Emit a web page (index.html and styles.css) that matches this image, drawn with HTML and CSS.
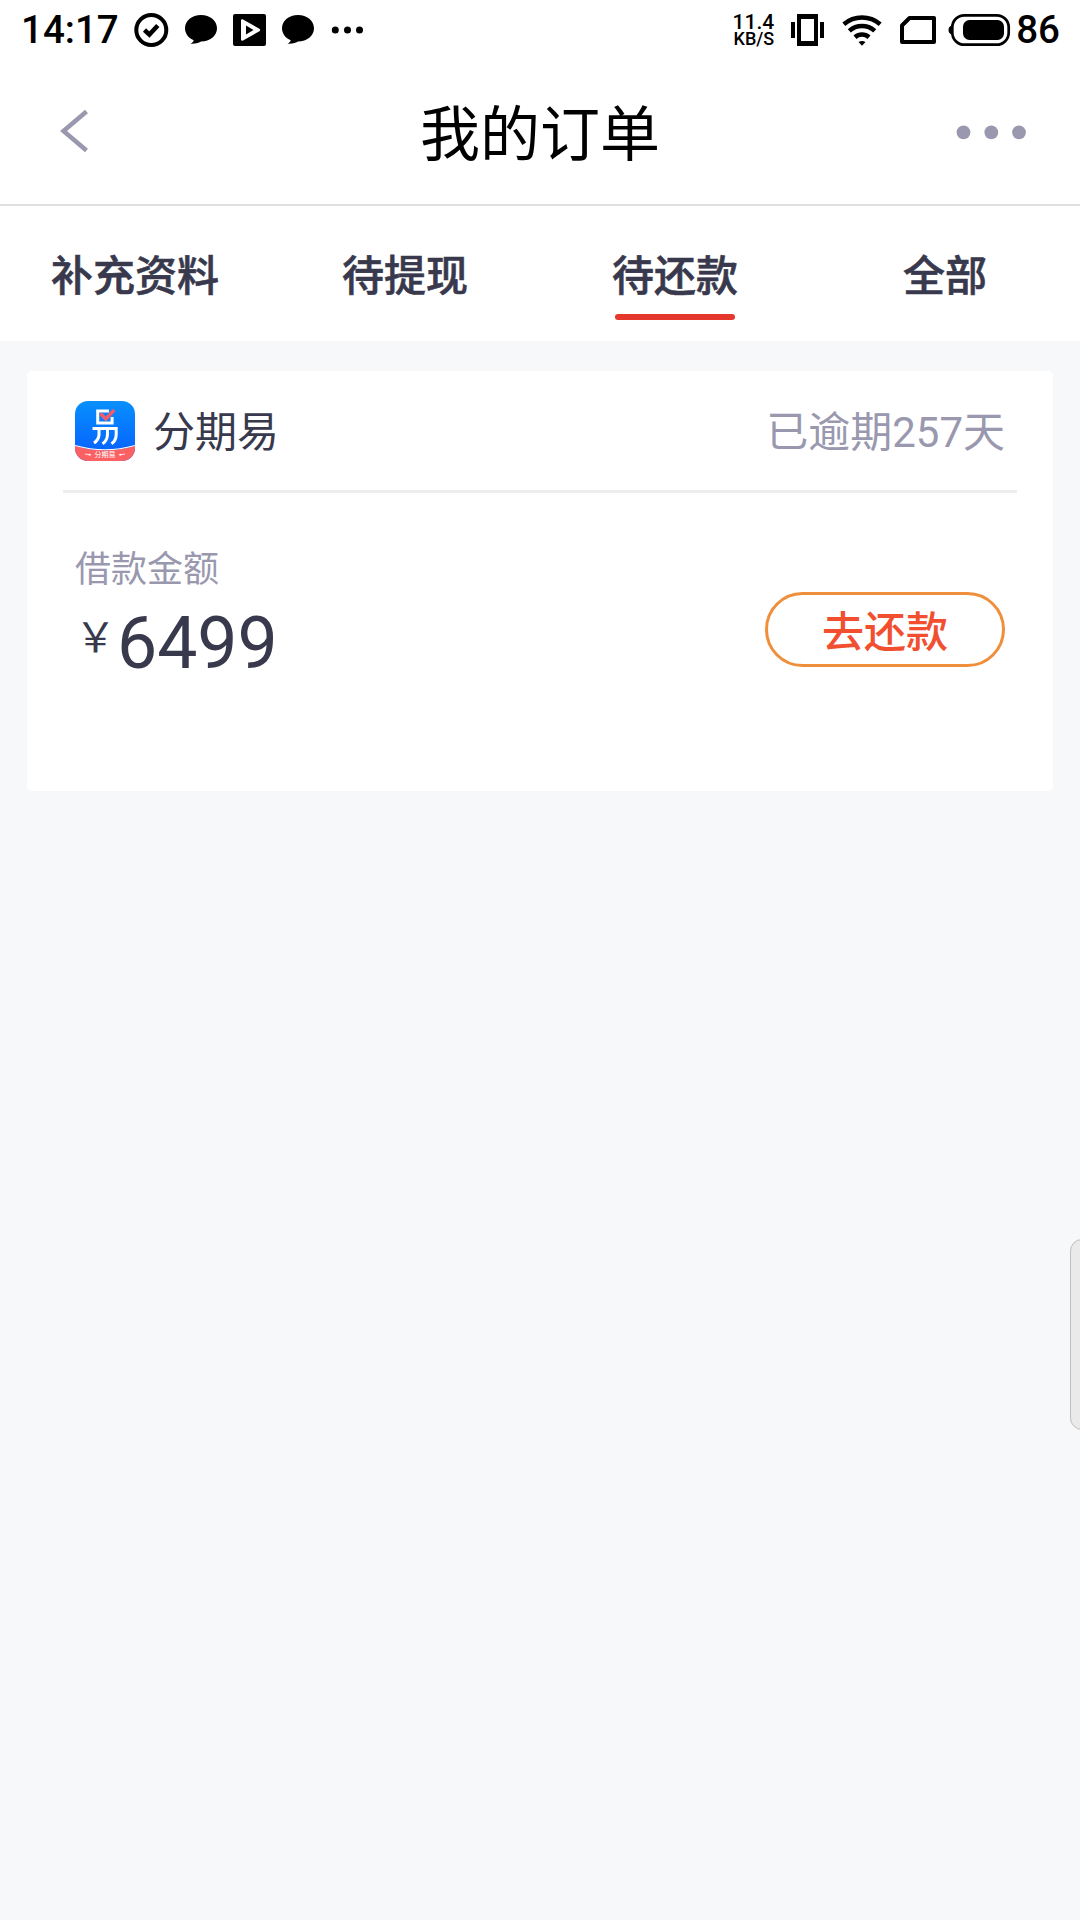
FILE: index.html
```html
<!DOCTYPE html>
<html lang="zh-CN">
<head>
<meta charset="utf-8">
<title>我的订单</title>
<link rel="stylesheet" href="styles.css">
</head>
<body>
<div class="status">
  <span class="status-num clock">14:17</span>
  <svg class="notices" width="230" height="36" viewBox="133 12 230 36">
    <circle cx="151.3" cy="30" r="15" fill="none" stroke="#000" stroke-width="4"/>
    <path d="M144.500 30l4.900 4.600 8.400-9.200" fill="none" stroke="#000" stroke-width="4.500"/>
    <path id="bubble" d="M201 15c9 0 16 5.900 16 13.300s-7 13.200-16 13.200c-1.500 1.200-5 2.500-10.500 2.300 2-1 3-2.200 3.200-3.500C188.500 38.200 185 33.600 185 28.300 185 20.900 192 15 201 15z"/>
    <path fill-rule="evenodd" d="M235 14h29a2 2 0 0 1 2 2v28a2 2 0 0 1-2 2h-29a2 2 0 0 1-2-2V16a2 2 0 0 1 2-2zM243 19.500c-1.200-.6-2 0-2 1.200v18.600c0 1.200.8 1.800 2 1.200l16.400-9.200c1-.6 1-2 0-2.600zM246 25.500l7.500 4.500-7.500 4.500z"/>
    <use href="#bubble" x="97"/>
    <circle cx="335.300" cy="30" r="3.500"/><circle cx="347.500" cy="30" r="3.500"/><circle cx="359.500" cy="30" r="3.500"/>
  </svg>
  <div class="speed"><span class="rate">11.4</span><span class="unit">KB/S</span></div>
  <svg class="signals" width="222" height="36" viewBox="790 12 222 36">
    <path fill-rule="evenodd" d="M797 14h21v32h-21zM801 19v22h13V19zM791 22h4v16h-4zM820 22h4v16h-4z"/>
    <g fill="none" stroke="#000" stroke-width="4.500">
      <path d="M843.800 24.200a28 28 0 0 1 36.400 0"/>
      <path d="M849.300 30.800a19 19 0 0 1 25.400 0"/>
      <path d="M855 37.200a10.500 10.500 0 0 1 14 0"/>
    </g>
    <path d="M902 42V25.500l7.500-7.500H934v24z" fill="none" stroke="#000" stroke-width="4" stroke-linejoin="round"/>
    <path d="M858.500 42q3.500-1.800 7 0L862 45.700z"/>
    <rect x="952.300" y="15.300" width="56.400" height="29.400" rx="12" fill="none" stroke="#000" stroke-width="2.700"/>
    <path d="M951.500 25.500c-4 1.500-4 7.500 0 9z"/>
    <rect x="963" y="20" width="41" height="20" rx="6.500"/>
  </svg>
  <span class="status-num">86</span>
</div>
<header class="nav">
  <svg width="30" height="46" viewBox="60 109 30 46"><path d="M86.500 111.500L63.500 131l23 19.500" fill="none" stroke="#9998ae" stroke-width="4.500"/></svg>
  <h1 class="title">我的订单</h1>
  <svg width="72" height="16" viewBox="955 124 72 16" fill="#9998ae"><circle cx="963.500" cy="132.300" r="6.900"/><circle cx="991.300" cy="132.300" r="6.900"/><circle cx="1019" cy="132.300" r="6.900"/></svg>
</header>
<nav class="tabs">
  <a class="tab">补充资料</a>
  <a class="tab">待提现</a>
  <a class="tab active">待还款</a>
  <a class="tab">全部</a>
</nav>
<main class="orders">
  <section class="card">
    <div class="card-head">
      <svg class="logo" width="60" height="60" viewBox="0 0 60 60">
        <defs>
          <linearGradient id="blue" x1="0" y1="0" x2="0" y2="1"><stop offset="0" stop-color="#0890fc"/><stop offset="1" stop-color="#055cff"/></linearGradient>
          <clipPath id="tile"><rect width="60" height="60" rx="13"/></clipPath>
        </defs>
        <g clip-path="url(#tile)">
          <rect width="60" height="60" fill="url(#blue)"/>
          <path d="M0 45q30 8.500 60 0v15H0z" fill="#fb6062"/>
          <path d="M0 44.500q30 8.500 60 0" fill="none" stroke="#fff" stroke-width="1.200"/>
        </g>
        <g fill="none" stroke="#fff" stroke-width="3">
          <path d="M34 10H22.700v12h14.400v-6"/>
          <path d="M17.500 27.500h23.700v6q0 6-4.700 9.300M24 28v6q-.5 5-5 8M32.500 28v5q0 6.500-5 9.800"/>
        </g>
        <path d="M25.500 12.500l5.200 5.500L39.300 9" fill="none" stroke="#f25b69" stroke-width="3.400"/>
        <text class="logo-text" x="30" y="56.300" text-anchor="middle">分期易</text>
        <path d="M10 53l5 .8M50 53l-5 .8" stroke="#fff" stroke-width=".8"/><path d="M14 52.500l2.700 1.500-2.900.8zM46 52.500l-2.700 1.500 2.900.8z" fill="#fff"/>
      </svg>
      <span class="name">分期易</span>
      <span class="overdue">已逾期257天</span>
    </div>
    <div class="card-body">
      <div>
        <div class="label">借款金额</div>
        <div class="amount"><span class="yen">￥</span><span class="sum">6499</span></div>
      </div>
      <a class="pay">去还款</a>
    </div>
  </section>
</main>
<div class="edge-handle"></div>
</body>
</html>
```
FILE: styles.css
```css
* { box-sizing: border-box; }
body {
  margin: 0;
  height: 1920px;
  overflow: hidden;
  background: #f6f8fa;
  color: #38394d;
  font-family: Roboto, "Noto Sans CJK SC", sans-serif;
  display: flex;
  flex-direction: column;
}
svg { display: block; flex: none; }
.status {
  height: 60px;
  padding: 0 20px 0 21px;
  background: #fff;
  color: #000;
  display: flex;
  align-items: center;
  font-weight: 500;
}
.status-num { font-size: 38.5px; line-height: 62px; }
.clock { width: 112px; }
.signals { margin-right: 4px; }
.speed {
  margin-left: auto;
  margin-right: 16px;
  display: flex;
  flex-direction: column;
  align-items: flex-end;
}
.rate { font-size: 21px; line-height: 16px; }
.unit { font-size: 18px; line-height: 17px; }
.nav {
  height: 146px;
  padding: 0 53px 0 60px;
  background: #fff;
  border-bottom: 2px solid #e0e0e0;
  display: flex;
  align-items: center;
  justify-content: space-between;
}
.title {
  margin: 0 0 0 35px;
  padding-top: 8px;
  color: #000;
  font-size: 60px;
  font-weight: 400;
  line-height: 88px;
}
.tabs {
  height: 135px;
  background: #fff;
  display: grid;
  grid-template-columns: repeat(4, 1fr);
}
.tab {
  padding-top: 41px;
  display: flex;
  flex-direction: column;
  align-items: center;
  font-size: 42px;
  font-weight: 500;
  line-height: 60px;
  -webkit-text-stroke: 0.6px;
}
.active::after {
  content: "";
  width: 120px;
  height: 6px;
  margin-top: 7px;
  border-radius: 3px;
  background: #e5372b;
}
.orders { padding: 30px 27px; }
.card {
  height: 420px;
  padding: 0 36px;
  background: #fff;
  border-radius: 5px;
}
.card-head {
  height: 122px;
  padding: 0 12px;
  border-bottom: 3px solid #ededed;
  display: flex;
  align-items: center;
  font-size: 42px;
  line-height: 60px;
}
.logo-text { font-size: 7px; fill: #fff; }
.name { margin-left: 18px; padding-top: 4px; font-size: 42px; }
.overdue { margin-left: auto; padding-top: 4px; color: #9998ae; }
.card-body {
  padding: 50px 12px 0;
  display: flex;
  justify-content: space-between;
}
.label {
  color: #9998ae;
  font-size: 36px;
  line-height: 54px;
}
.amount {
  display: flex;
  align-items: flex-start;
}
.yen { width: 42px; font-size: 41px; line-height: 82px; }
.sum { font-size: 71.5px; line-height: 94px; }
.pay {
  width: 240px;
  height: 75px;
  margin-top: 49px;
  border: 3px solid #ef8f3c;
  border-radius: 38px;
  color: #f24e30;
  font-size: 42px;
  font-weight: 500;
  line-height: 75px;
  text-align: center;
}
.edge-handle {
  position: absolute;
  top: 1239px;
  right: -20px;
  width: 30px;
  height: 191px;
  border: 1px solid #bfbfbf;
  border-radius: 12px;
  background: #eaeaea;
}
```
